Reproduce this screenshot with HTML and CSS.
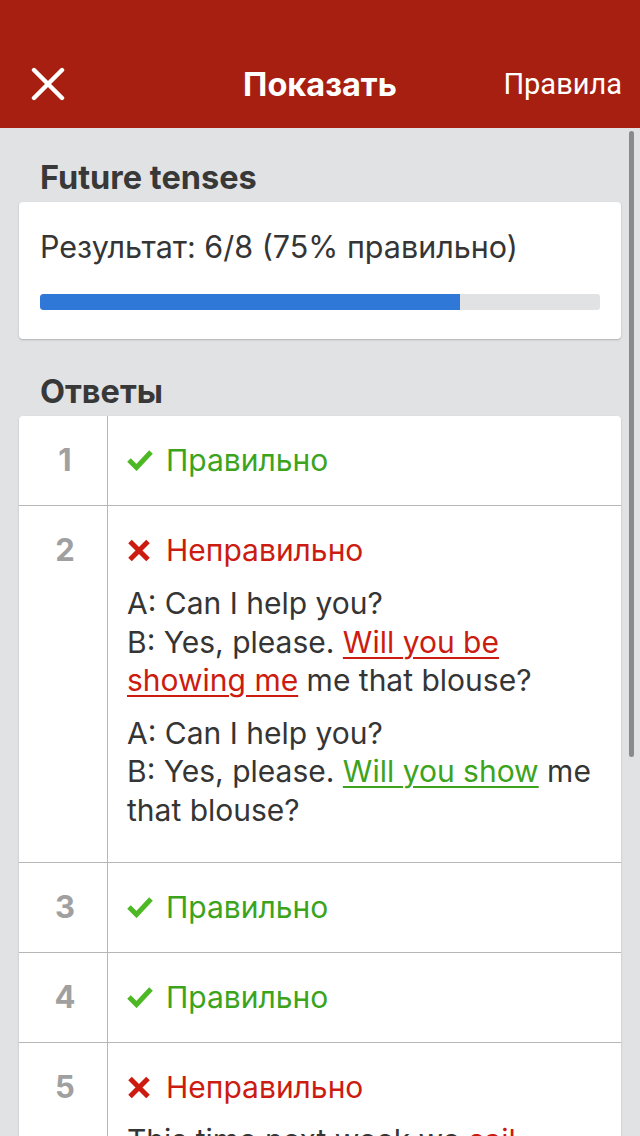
FILE: index.html
```html
<!DOCTYPE html>
<html>
  <head>
    <meta charset="utf-8">
    <link rel="stylesheet" href="styles.css">
  </head>
  <body>
    <div class="screen">
      <header class="topbar">
        <div class="close">
          <svg width="34" height="34" viewBox="0 0 34 34"><path d="M3 3 L31 31 M31 3 L3 31" stroke="#fff" stroke-width="4.4" stroke-linecap="round" fill="none"/></svg>
        </div>
        <div class="title">Показать</div>
        <div class="rules">Правила</div>
      </header>

      <div class="content">
        <h2 class="section-title">Future tenses</h2>
        <div class="card score">
          <p class="score-text">Результат: 6/8 (75% правильно)</p>
          <div class="progress"><div class="progress-fill" style="width: 75%"></div></div>
        </div>

        <h2 class="section-title">Ответы</h2>
        <div class="card answers">
          <div class="answer">
            <div class="num">1</div>
            <div class="body">
              <div class="status ok">
                <svg class="icon" width="26" height="22" viewBox="0 0 26 22"><path d="M2 11 L9.5 18.5 L24 3" stroke="#4cb824" stroke-width="5" fill="none"/></svg>
                Правильно
              </div>
            </div>
          </div>
          <div class="answer">
            <div class="num">2</div>
            <div class="body">
              <div class="status bad">
                <svg class="icon" width="26" height="22" viewBox="0 0 26 22"><path d="M3 2.5 L21 20.5 M21 2.5 L3 20.5" stroke="#cc1b10" stroke-width="5" fill="none"/></svg>
                Неправильно
              </div>
              <p class="phrase">A: Can I help you?<br>B: Yes, please. <span class="wrong">Will you be showing me</span> me that blouse?</p>
              <p class="phrase">A: Can I help you?<br>B: Yes, please. <span class="right">Will you show</span> me that blouse?</p>
            </div>
          </div>
          <div class="answer">
            <div class="num">3</div>
            <div class="body">
              <div class="status ok">
                <svg class="icon" width="26" height="22" viewBox="0 0 26 22"><path d="M2 11 L9.5 18.5 L24 3" stroke="#4cb824" stroke-width="5" fill="none"/></svg>
                Правильно
              </div>
            </div>
          </div>
          <div class="answer">
            <div class="num">4</div>
            <div class="body">
              <div class="status ok">
                <svg class="icon" width="26" height="22" viewBox="0 0 26 22"><path d="M2 11 L9.5 18.5 L24 3" stroke="#4cb824" stroke-width="5" fill="none"/></svg>
                Правильно
              </div>
            </div>
          </div>
          <div class="answer">
            <div class="num">5</div>
            <div class="body">
              <div class="status bad">
                <svg class="icon" width="26" height="22" viewBox="0 0 26 22"><path d="M3 2.5 L21 20.5 M21 2.5 L3 20.5" stroke="#cc1b10" stroke-width="5" fill="none"/></svg>
                Неправильно
              </div>
              <p class="phrase">This time next week we <span class="wrong">sail</span> across the Atlantic.</p>
              <p class="phrase">This time next week we <span class="right">will be sailing</span> across the Atlantic.</p>
            </div>
          </div>
        </div>
      </div>

      <div class="scroll-indicator"></div>
    </div>
  </body>
</html>
```

FILE: styles.css
```css
html, body {
  margin: 0;
  padding: 0;
}

body {
  font-family: Inter, Roboto, "Noto Sans", sans-serif;
  color: #353535;
  background: #e1e2e4;
}

.screen {
  position: relative;
  height: 1136px;
  overflow: hidden;
  display: flex;
  flex-direction: column;
}

.topbar {
  flex: none;
  height: 88px;
  padding-top: 40px;
  background: #a71f10;
  color: #fff;
  display: grid;
  grid-template-columns: 1fr auto 1fr;
  align-items: center;
}

.close {
  padding-left: 31px;
  display: flex;
  align-items: center;
}

.title {
  font-size: 32.5px;
  font-weight: 700;
  text-align: center;
}

.rules {
  font-family: Roboto, sans-serif;
  font-size: 29px;
  text-align: right;
  padding-right: 18px;
}

.content {
  flex: 1;
  padding: 0 19px;
}

.section-title {
  margin: 32px 0 6px;
  padding-left: 21px;
  font-size: 32.5px;
  line-height: 36px;
  font-weight: 700;
  color: #383838;
}

.section-title + .card + .section-title {
  margin-top: 35px;
}

.card {
  background: #fff;
  border-radius: 4px;
  box-shadow: 0 1px 2px rgba(0, 0, 0, 0.22);
}

.score {
  padding: 26px 21px 29px;
}

.score-text {
  margin: 0 0 28px;
  font-size: 30.5px;
  line-height: 38px;
}

.progress {
  height: 16px;
  border-radius: 3px;
  background: #e1e2e4;
  overflow: hidden;
}

.progress-fill {
  height: 100%;
  background: #3078d8;
  border-radius: 3px 0 0 3px;
}

.answer {
  display: flex;
  border-bottom: 1px solid #b6b6b6;
}

.num {
  flex: none;
  width: 84px;
  padding: 25px 0 0 4px;
  border-right: 1px solid #b6b6b6;
  text-align: center;
  font-size: 31px;
  line-height: 38px;
  font-weight: 700;
  color: #a0a0a0;
}

.body {
  flex: 1;
  padding: 25px 21px 26px 19px;
  font-size: 30px;
  line-height: 38.5px;
}

.status {
  display: flex;
  align-items: center;
  gap: 13px;
  line-height: 38px;
}

.status.ok {
  color: #3ca31c;
}

.status.bad {
  color: #cc1b10;
}

.icon {
  flex: none;
}

.phrase {
  margin: 15px 0 0;
}

.phrase + .phrase {
  margin-top: 14px;
}

.answer:nth-child(2) .body {
  padding-bottom: 33px;
}

.wrong,
.right {
  text-decoration: underline;
  text-decoration-thickness: 2px;
  text-underline-offset: 4px;
}

.wrong {
  color: #cc1b10;
}

.right {
  color: #3ca31c;
}

.scroll-indicator {
  position: absolute;
  left: 629px;
  top: 131px;
  width: 5px;
  height: 626px;
  border-radius: 3px;
  background: #8a8a8a;
}
```
